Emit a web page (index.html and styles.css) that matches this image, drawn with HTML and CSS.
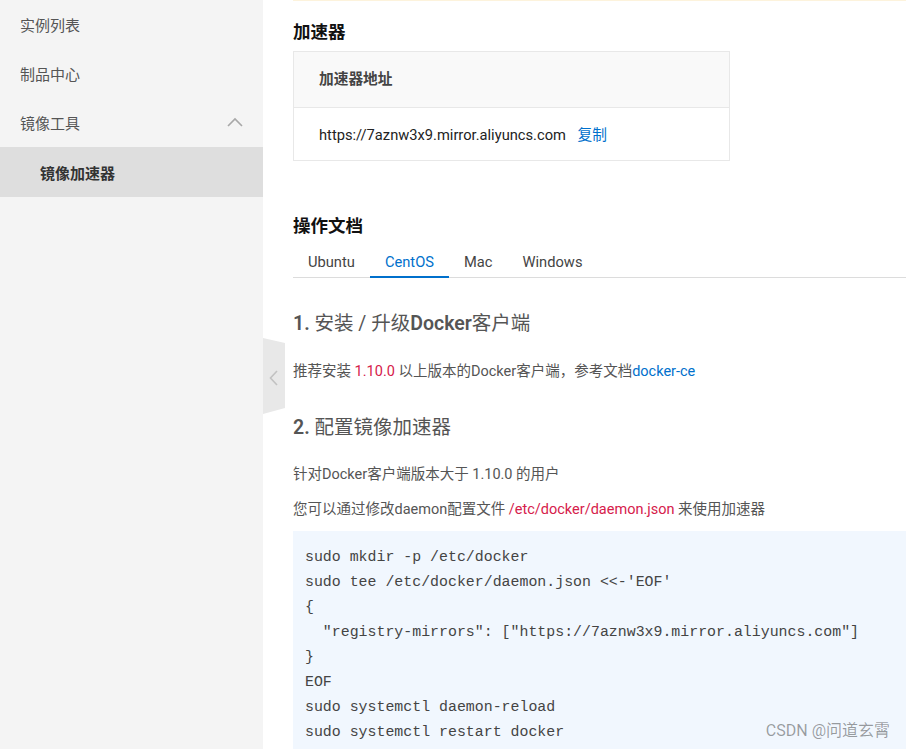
FILE: index.html
```html
<!DOCTYPE html>
<html lang="zh-CN">
<head>
    <meta charset="UTF-8">
    <meta name="viewport" content="width=device-width, initial-scale=1.0">
    <title>镜像加速器</title>
    <link rel="stylesheet" href="styles.css">
</head>
<body>
    <div class="layout">
        <aside class="sidebar">
            <div class="nav-item">实例列表</div>
            <div class="nav-item">制品中心</div>
            <div class="nav-item nav-group">
                <span>镜像工具</span>
                <svg class="chevron-up" width="16" height="10" viewBox="0 0 16 10">
                    <polyline points="1,9 8,2 15,9" fill="none" stroke="#a8a8a8" stroke-width="1.6"/>
                </svg>
            </div>
            <div class="nav-item nav-sub active">镜像加速器</div>
        </aside>

        <div class="collapse-handle">
            <svg width="22" height="76" viewBox="0 0 22 76">
                <polygon points="0,0 22,5 22,70 0,76" fill="#e8e8e8"/>
                <polyline points="14,33 7.5,40 14,47" fill="none" stroke="#c2c2c2" stroke-width="1.6"/>
            </svg>
        </div>

        <main class="main">
            <div class="notice-line"></div>

            <h2 class="section-title">加速器</h2>
            <div class="addr-table">
                <div class="addr-head">加速器地址</div>
                <div class="addr-row">
                    <span class="addr-url">https://7aznw3x9.mirror.aliyuncs.com</span>
                    <a class="link copy-link">复制</a>
                </div>
            </div>

            <h2 class="section-title docs-title">操作文档</h2>
            <div class="tabs">
                <div class="tab">Ubuntu</div>
                <div class="tab active">CentOS</div>
                <div class="tab">Mac</div>
                <div class="tab">Windows</div>
            </div>

            <h3 class="step-title"><b>1.</b> 安装 / 升级<b>Docker</b>客户端</h3>
            <p class="text first-text">推荐安装 <span class="hl">1.10.0</span> 以上版本的Docker客户端，参考文档<a class="link">docker-ce</a></p>

            <h3 class="step-title step-two"><b>2.</b> 配置镜像加速器</h3>
            <p class="text">针对Docker客户端版本大于 1.10.0 的用户</p>
            <p class="text text-tight">您可以通过修改daemon配置文件 <span class="hl">/etc/docker/daemon.json</span> 来使用加速器</p>

            <div class="code">
                <code class="code-line">sudo mkdir -p /etc/docker</code>
                <code class="code-line">sudo tee /etc/docker/daemon.json &lt;&lt;-'EOF'</code>
                <code class="code-line">{</code>
                <code class="code-line">  "registry-mirrors": ["https://7aznw3x9.mirror.aliyuncs.com"]</code>
                <code class="code-line">}</code>
                <code class="code-line">EOF</code>
                <code class="code-line">sudo systemctl daemon-reload</code>
                <code class="code-line">sudo systemctl restart docker</code>
            </div>
        </main>
    </div>

    <div class="watermark">CSDN @问道玄霄</div>
</body>
</html>
```

FILE: styles.css
```css
body {
    margin: 0;
    padding: 0;
    font-family: Roboto, "Noto Sans CJK SC", sans-serif;
    color: #333;
    background-color: #fff;
    overflow: hidden;
    height: 749px;
}
.layout {
    display: flex;
    height: 749px;
}
.sidebar {
    width: 263px;
    flex-shrink: 0;
    background-color: #f4f4f4;
}
.nav-item {
    height: 46px;
    line-height: 46px;
    padding-top: 3px;
    padding-left: 20px;
    font-size: 15px;
    color: #555;
}
.nav-group {
    display: flex;
    justify-content: space-between;
    align-items: center;
    padding-right: 20px;
}
.chevron-up {
    display: block;
    margin-top: -4px;
}
.nav-sub {
    padding-left: 40px;
    padding-top: 4px;
}
.nav-item.active {
    background-color: #dedede;
    color: #333;
    font-weight: bold;
}
.collapse-handle {
    position: absolute;
    left: 263px;
    top: 338px;
    width: 22px;
    height: 76px;
}
.collapse-handle svg {
    display: block;
}
.main {
    flex: 1;
    padding-left: 30px;
    overflow: hidden;
}
.notice-line {
    height: 1px;
    background-color: #fdf3dc;
}
.section-title {
    margin: 19px 0 0;
    font-size: 17.5px;
    line-height: 24px;
    font-weight: bold;
    color: #111;
}
.addr-table {
    width: 435px;
    margin-top: 7px;
    border: 1px solid #e8e8e8;
}
.addr-head {
    height: 55px;
    line-height: 55px;
    padding-left: 25px;
    background-color: #f9f9f9;
    border-bottom: 1px solid #e8e8e8;
    font-size: 14.7px;
    font-weight: bold;
    color: #444;
}
.addr-row {
    height: 52px;
    line-height: 54px;
    padding-left: 25px;
    font-size: 14.7px;
}
.addr-url {
    color: #222;
}
.copy-link {
    margin-left: 8px;
}
.link {
    color: #0070cc;
    text-decoration: none;
    cursor: pointer;
}
.docs-title {
    margin-top: 53px;
}
.tabs {
    display: flex;
    border-bottom: 1px solid #dcdcdc;
}
.tab {
    padding: 14px 15px 4px;
    line-height: 20px;
    font-size: 14.7px;
    color: #444;
    border-bottom: 2px solid transparent;
    margin-bottom: -1px;
}
.tab.active {
    color: #0070cc;
    border-bottom-color: #0070cc;
}
.step-title {
    margin: 32px 0 0;
    font-size: 19.5px;
    line-height: 28px;
    font-weight: normal;
    color: #555;
}
.step-title b {
    font-weight: 600;
}
.step-two {
    margin-top: 30px;
}
.text {
    margin: 21px 0 0;
    font-size: 14.5px;
    line-height: 24px;
    color: #555;
}
.first-text {
    margin-top: 22px;
}
.text-tight {
    margin-top: 11px;
}
.hl {
    color: #d6204b;
}
.code {
    margin-top: 9px;
    padding: 14px 12px 20px;
    background-color: #f1f7fe;
}
.code-line {
    display: block;
    width: fit-content;
    white-space: pre;
    font-family: "Liberation Mono", monospace;
    font-size: 14.9px;
    line-height: 25px;
    color: #444;
}
.watermark {
    position: absolute;
    right: 16px;
    top: 719px;
    font-family: Roboto, "Noto Sans CJK SC", sans-serif;
    font-size: 16px;
    line-height: 24px;
    color: rgba(0, 0, 0, 0.38);
}
```
